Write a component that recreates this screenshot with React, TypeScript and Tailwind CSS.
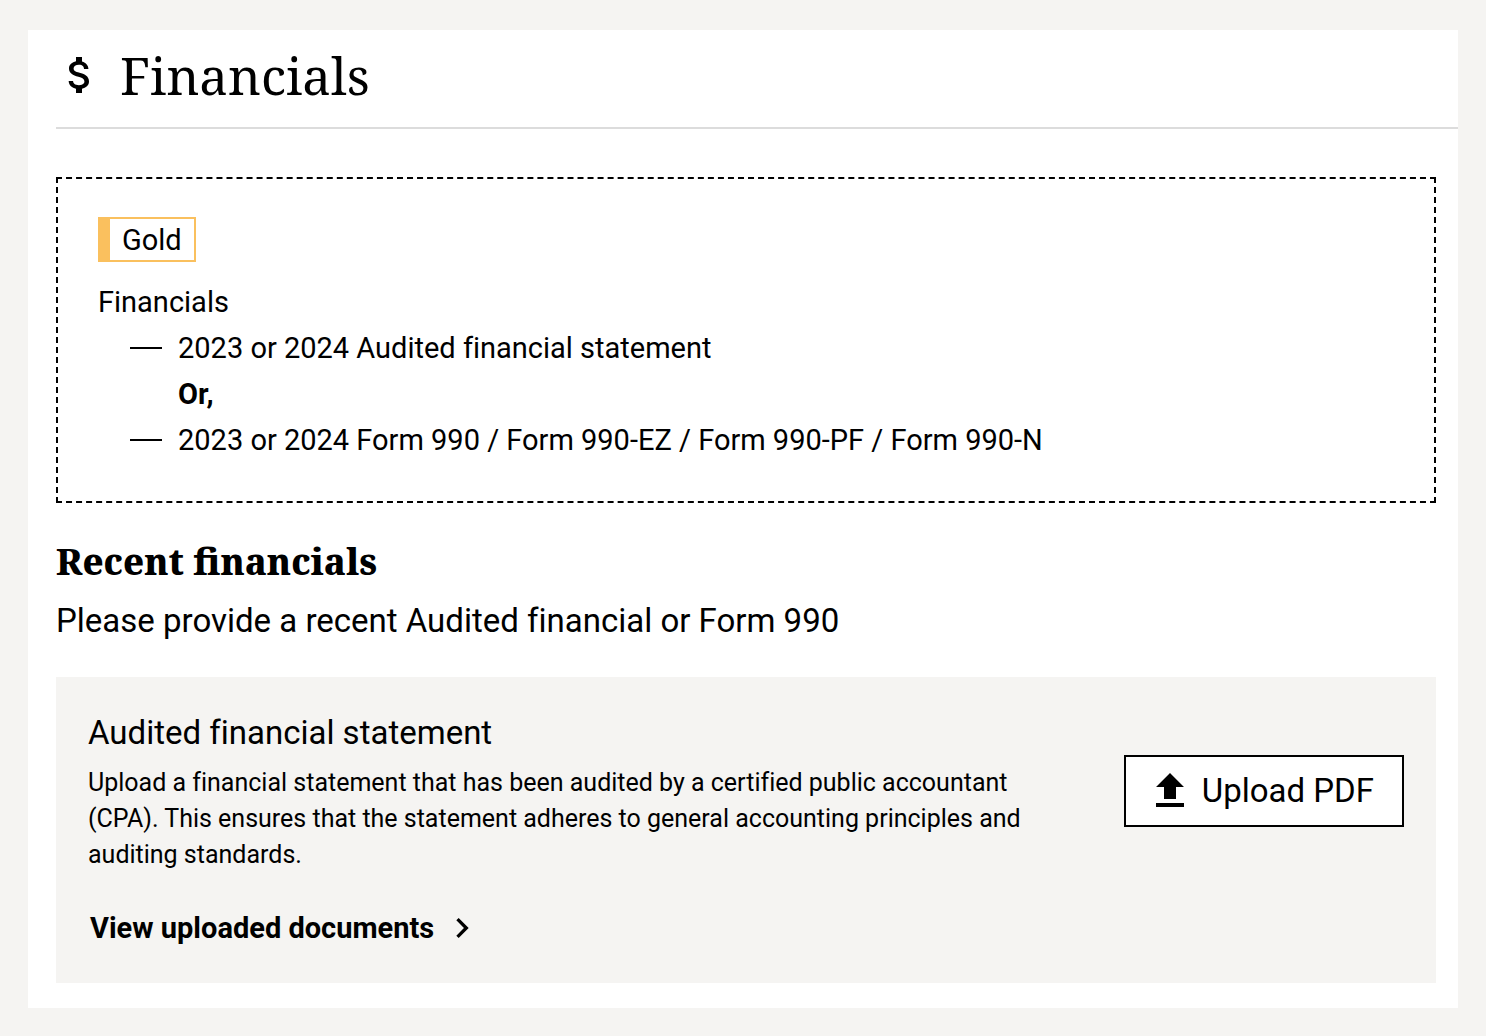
import { MdAttachMoney, MdUpload, MdChevronRight } from "react-icons/md";

const requirements = [
  "2023 or 2024 Audited financial statement",
  "2023 or 2024 Form 990 / Form 990-EZ / Form 990-PF / Form 990-N",
];

function Requirement({ text }: { text: string }) {
  return (
    <li className="flex items-center gap-4">
      <span className="h-0.5 w-8 shrink-0 bg-black" aria-hidden="true" />
      <span>{text}</span>
    </li>
  );
}

export default function App() {
  return (
    <div className="min-h-screen bg-[#f5f4f2] px-7 pt-[30px] pb-7 font-[Roboto,'Liberation_Sans',sans-serif] text-black [font-variant-ligatures:none]">
      <main className="bg-white pb-[25px] pl-7">
        <header className="flex h-[99px] items-center gap-4 border-b-2 border-[#dcdcdc] pb-2">
          <MdAttachMoney className="size-12" aria-hidden="true" />
          <h1 className="font-['Noto_Serif','DejaVu_Serif',serif] text-[51px] leading-[72px]">Financials</h1>
        </header>
        <div className="pr-[22px]">
          <section className="mt-12 border-2 border-dashed border-black px-10 py-[38px] text-[29px] leading-[46px]">
            <div className="flex">
              <span className="flex h-[45px] items-center border-2 border-l-12 border-[#fac05e] px-3">Gold</span>
            </div>
            <p className="mt-[17px]">Financials</p>
            <ul className="pl-8">
              <Requirement text={requirements[0]} />
              <li className="pl-12 font-bold">Or,</li>
              <Requirement text={requirements[1]} />
            </ul>
          </section>
          <h2 className="mt-9 font-['Noto_Serif','DejaVu_Serif',serif] text-4xl leading-[46px] font-extrabold [font-variant-ligatures:normal]">Recent financials</h2>
          <p className="mt-3 text-[33px] leading-[48px]">Please provide a recent Audited financial or Form 990</p>
          <section className="mt-8 flex items-start justify-between bg-[#f5f4f2] p-8">
            <div className="max-w-[940px]">
              <h3 className="text-[33px] leading-[48px]">Audited financial statement</h3>
              <p className="mt-2 text-[25px] leading-9">
                Upload a financial statement that has been audited by a certified public accountant (CPA). This ensures that the statement adheres to general accounting principles and auditing standards.
              </p>
              <button type="button" className="mt-8 flex items-center gap-2 pl-0.5 text-[29px] leading-[46px] font-bold">
                View uploaded documents
                <MdChevronRight className="size-10" aria-hidden="true" />
              </button>
            </div>
            <button type="button" className="mt-[46px] flex h-[72px] shrink-0 items-center gap-2 border-2 border-black bg-white pr-7 pl-5 text-[33px]">
              <MdUpload className="size-12" aria-hidden="true" />
              Upload PDF
            </button>
          </section>
        </div>
      </main>
    </div>
  );
}
